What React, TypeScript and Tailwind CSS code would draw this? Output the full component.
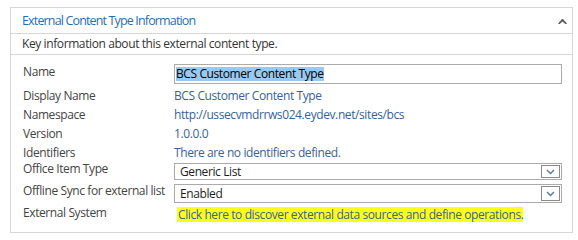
import React from "react";

const font = { fontFamily: '"Segoe UI", "Open Sans", "Noto Sans", sans-serif' };

function Chevron() {
  return (
    <svg width="9" height="6" viewBox="0 0 9 6">
      <path d="M1 1 L4.5 4.5 L8 1" fill="none" stroke="#5d7b9c" strokeWidth="1.5" />
    </svg>
  );
}

function Select({ value }: { value: string }) {
  return (
    <div className="flex h-full w-[388px] items-center border border-[#ababab] bg-white">
      <span className="flex-1 pl-[5px] text-[12px] leading-[16px] tracking-[-0.4px] text-[#1e1e1e]">{value}</span>
      <div className="mr-[1px] flex h-[calc(100%-2px)] w-[19px] items-center justify-center border border-[#8a8a8a] bg-white">
        <Chevron />
      </div>
    </div>
  );
}

export default function App() {
  const label = "w-[163px] shrink-0 pl-[12px] text-[12px] tracking-[-0.4px] text-[#444444] whitespace-nowrap";
  const val = "text-[12px] leading-[19px] tracking-[-0.4px] text-[#35639a] whitespace-nowrap";
  return (
    <div className="h-[240px] w-[578px] bg-white pl-[10px] pt-[7px]" style={font}>
      <div className="w-[563px] border border-[#d6d6d6]">
        {/* header */}
        <div className="flex h-[26px] items-center justify-between border-b border-[#d6d6d6] pl-[11px] pr-[5px]">
          <span className="text-[12.5px] leading-[20px] tracking-[-0.85px] text-[#1f6fb5]">
            External Content Type Information
          </span>
          <svg width="9" height="6" viewBox="0 0 9 6">
            <path d="M0.5 5.5 L4.5 1 L8.5 5.5 L7 5.5 L4.5 3 L2 5.5 Z" fill="#555" stroke="#555" strokeWidth="0.8" strokeLinejoin="round" />
          </svg>
        </div>
        <div className="flex h-[21px] items-center border-b border-[#d6d6d6] pl-[11px]">
          <span className="text-[12px] leading-[18px] tracking-[-0.4px] text-[#333333]">Key information about this external content type.</span>
        </div>

        <div className="flex flex-col pb-[7px] pt-[7px]">
          <div className="flex h-[24px]">
            <span className={`${label} leading-[19px]`}>Name</span>
            <div className="mt-[2px] flex h-[20px] w-[388px] items-center border border-[#ababab] pl-[1px]">
              <span className="bg-[#99c9ef] text-[12px] leading-[14px] tracking-[-0.4px] text-black">BCS Customer Content Type</span>
            </div>
          </div>
          <div className="flex h-[19px]">
            <span className={`${label} leading-[19px]`}>Display Name</span>
            <span className={val}>BCS Customer Content Type</span>
          </div>
          <div className="flex h-[19px]">
            <span className={`${label} leading-[19px]`}>Namespace</span>
            <span className={val}>http://ussecvmdrrws024.eydev.net/sites/bcs</span>
          </div>
          <div className="flex h-[19px]">
            <span className={`${label} leading-[19px]`}>Version</span>
            <span className={val}>1.0.0.0</span>
          </div>
          <div className="flex h-[19px]">
            <span className={`${label} leading-[19px]`}>Identifiers</span>
            <span className={val}>There are no identifiers defined.</span>
          </div>
          <div className="flex h-[21px]">
            <span className={`${label} leading-[14px]`}>Office Item Type</span>
            <div className="mt-[1px] h-[17px]">
              <Select value="Generic List" />
            </div>
          </div>
          <div className="flex h-[22px]">
            <span className={`${label} leading-[16px]`}>Offline Sync for external list</span>
            <div className="mt-[1px] h-[19px]">
              <Select value="Enabled" />
            </div>
          </div>
          <div className="flex h-[20px]">
            <span className={`${label} leading-[16px]`}>External System</span>
            <div className="ml-[3px] mt-[2px] flex h-[15px] w-[346px] items-center bg-[#ffff1a] pl-[1px]">
              <span className="whitespace-nowrap text-[12px] leading-[15px] tracking-[-0.4px] text-[#35639a]">
                Click here to discover external data sources and define operations.
              </span>
            </div>
          </div>
        </div>
      </div>
    </div>
  );
}
